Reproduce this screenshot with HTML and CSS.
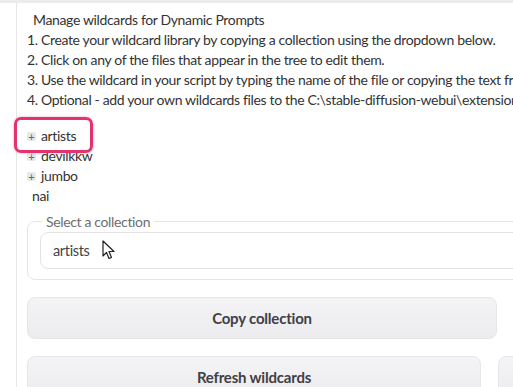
FILE: index.html
```html
<!DOCTYPE html>
<html lang="en">
<head>
  <meta charset="UTF-8">
  <title>Wildcards Manager</title>
  <link rel="stylesheet" href="styles.css">
</head>
<body>
  <div class="panel">
    <div class="intro">
      <p class="lead">Manage wildcards for Dynamic Prompts</p>
      <p>1. Create your wildcard library by copying a collection using the dropdown below.</p>
      <p>2. Click on any of the files that appear in the tree to edit them.</p>
      <p>3. Use the wildcard in your script by typing the name of the file or copying the text from the editor.</p>
      <p>4. Optional - add your own wildcards files to the C:\stable-diffusion-webui\extensions\sd-dynamic-prompts\wildcards folder</p>
    </div>

    <!-- TREE -->
    <ul class="tree">
      <li class="folder"><span class="toggle">+</span>artists</li>
      <li class="folder"><span class="toggle">+</span>devilkkw</li>
      <li class="folder"><span class="toggle">+</span>jumbo</li>
      <li class="file">nai</li>
      <div class="highlight"></div>
    </ul>

    <!-- COLLECTION -->
    <fieldset class="collection">
      <legend>Select a collection</legend>
      <div class="select">
        artists
        <svg class="cursor" width="13" height="20" viewBox="0 0 13 20">
          <path d="M1 1 L1 16 L4.5 12.5 L7 18.5 L9.5 17.5 L7 11.5 L12 11.5 Z" fill="#fff" stroke="#222" stroke-width="1.2" stroke-linejoin="round"/>
        </svg>
      </div>
    </fieldset>

    <div class="row">
      <button class="btn btn-copy">Copy collection</button>
    </div>
    <div class="row">
      <button class="btn btn-refresh">Refresh wildcards</button>
      <button class="btn btn-other"></button>
    </div>
  </div>
</body>
</html>
```

FILE: styles.css
```css
html, body {
  overflow: hidden;
}

body {
  margin: 0;
  font-family: "Lato", "Noto Sans", sans-serif;
  font-size: 14px;
  letter-spacing: -0.35px;
  color: #333;
  background-color: #fff;
  border-top: 3px solid #ececec;
  height: 384px;
}

.panel {
  margin-left: 16px;
  width: 800px;
  height: 100%;
  border-left: 1px solid #e6e6e6;
  padding: 7px 0 0 10px;
}

.intro p {
  margin: 0;
  line-height: 20px;
  white-space: nowrap;
}

.intro .lead {
  padding-left: 6px;
}

/* TREE */
.tree {
  position: relative;
  list-style: none;
  margin: 16px 0 0;
  padding: 0;
}

.tree li {
  line-height: 20px;
  display: flex;
  align-items: center;
}

.toggle {
  display: inline-flex;
  align-items: center;
  justify-content: center;
  width: 9px;
  height: 9px;
  margin: 0 5px 0 0;
  font-size: 11px;
  line-height: 1;
  letter-spacing: 0;
  color: #666;
  background: #e8e8e8;
  border-radius: 2px;
}

.tree .file {
  padding-left: 5px;
}

.highlight {
  position: absolute;
  left: -13px;
  top: -9px;
  width: 73px;
  height: 30px;
  border: 3px solid #e2336f;
  border-radius: 7px;
  box-shadow: 0 0 3px rgba(226, 51, 111, 0.4);
}

/* COLLECTION */
.collection {
  width: 700px;
  margin: 7px 0 0;
  padding: 2px 12px 10px;
  border: 1px solid #e5e5e5;
  border-radius: 8px;
  box-sizing: border-box;
}

.collection legend {
  padding: 0 4px;
  margin-left: 2px;
  font-size: 14px;
  color: #6e6e6e;
}

.select {
  position: relative;
  height: 37px;
  display: flex;
  align-items: center;
  padding-left: 12px;
  border: 1px solid #e3e3e3;
  border-radius: 8px;
  color: #444;
  font-size: 14.5px;
  box-sizing: border-box;
}

.cursor {
  position: absolute;
  left: 61px;
  top: 7px;
}

/* BUTTONS */
.row {
  display: flex;
  gap: 17px;
  margin-top: 17px;
}

.btn {
  height: 42px;
  font-family: inherit;
  font-size: 15px;
  font-weight: bold;
  letter-spacing: -0.2px;
  color: #404046;
  background: linear-gradient(#f4f4f6, #ececef);
  border: 1px solid #e6e6ea;
  border-radius: 8px;
}

.btn-copy {
  width: 470px;
}

.btn-refresh {
  width: 454px;
}

.btn-other {
  width: 200px;
}
```
